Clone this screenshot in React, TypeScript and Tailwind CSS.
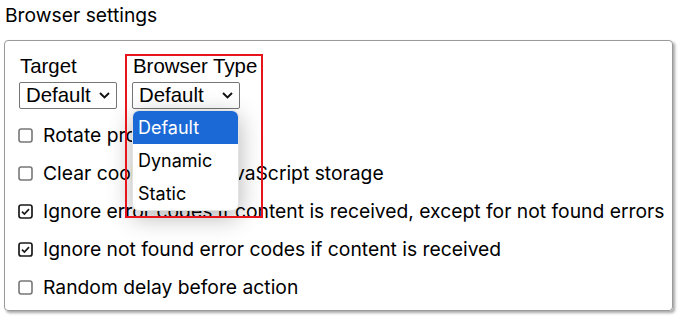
import React from "react";

const Chevron = () => (
  <svg width="11" height="7" viewBox="0 0 11 7" fill="none">
    <path d="M1 1l4.5 4.5L10 1" stroke="#111" strokeWidth="1.9" />
  </svg>
);

const Box = ({ checked }: { checked: boolean }) =>
  checked ? (
    <svg width="15" height="15" viewBox="0 0 15 15" className="shrink-0">
      <rect x="1" y="1" width="13" height="13" rx="2.2" fill="#fff" stroke="#1a1a1a" strokeWidth="1.7" />
      <path d="M4 7.6l2.4 2.4L11 5.2" stroke="#1a1a1a" strokeWidth="1.7" fill="none" />
    </svg>
  ) : (
    <svg width="15" height="15" viewBox="0 0 15 15" className="shrink-0">
      <rect x="1" y="1" width="13" height="13" rx="2.2" fill="#fff" stroke="#777" strokeWidth="1.6" />
    </svg>
  );

const options = [
  { label: "Rotate proxies", checked: false },
  { label: "Clear cookies and JavaScript storage", checked: false },
  {
    label: "Ignore error codes if content is received, except for not found errors",
    checked: true,
  },
  { label: "Ignore not found error codes if content is received", checked: true },
  { label: "Random delay before action", checked: false },
];

export default function App() {
  return (
    <div className="w-[681px] h-[318px] bg-white text-black px-[4px] pt-[2px] font-['Inter',sans-serif] text-[19.3px]">
      <div className="pl-[1px] leading-[26px]">Browser settings</div>
      <div className="relative mt-[12px] w-[669px] h-[271px] border border-[#9a9a9a] rounded-[4px] shadow-[2px_2px_3px_rgba(0,0,0,0.35)] pl-[13px] pt-[14px]">
        <div className="flex gap-[15px] font-['Liberation_Sans',Arial,sans-serif] text-[20.4px]">
          <div className="flex flex-col pl-[1px]">
            <span className="leading-[22px] pl-[1px]">Target</span>
            <div className="mt-[5px] w-[98px] h-[27px] border border-[#767676] rounded-[2px] flex items-center justify-between pl-[6px] pr-[6px]">
              <span>Default</span>
              <Chevron />
            </div>
          </div>
          <div className="flex flex-col">
            <span className="leading-[22px] pl-[1px]">Browser Type</span>
            <div className="mt-[5px] w-[108px] h-[27px] border border-[#767676] rounded-[2px] flex items-center justify-between pl-[6px] pr-[6px]">
              <span>Default</span>
              <Chevron />
            </div>
          </div>
        </div>
        <div className="mt-[7px] flex flex-col">
          {options.map((o) => (
            <div key={o.label} className="h-[38px] flex items-center gap-[10px]">
              <Box checked={o.checked} />
              <span className="whitespace-nowrap">{o.label}</span>
            </div>
          ))}
        </div>

        {/* dropdown popup */}
        <div className="absolute left-[127px] top-[69px] w-[107px] rounded-[7px] bg-white overflow-hidden shadow-[0_6px_24px_rgba(0,0,0,0.3)] border border-[#e2e2e2] text-[18px]">
          <div className="h-[33px] bg-[#1b69d6] text-white flex items-center pl-[5px]">Default</div>
          <div className="h-[33px] flex items-center pl-[5px]">Dynamic</div>
          <div className="h-[33px] flex items-center pl-[5px]">Static</div>
        </div>

        {/* highlight */}
        <div className="absolute left-[120px] top-[13px] w-[138px] h-[164px] border-2 border-[#e8141c] pointer-events-none" />
      </div>
    </div>
  );
}
